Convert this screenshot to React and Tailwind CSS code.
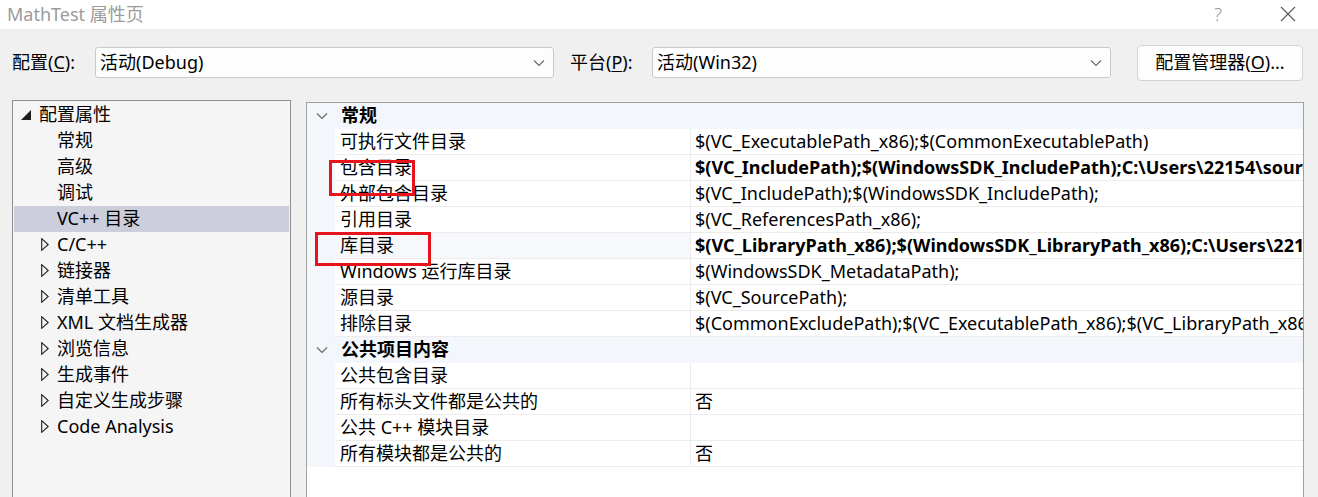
import React from 'react';

const FONT = { fontFamily: '"Noto Sans", "Noto Sans CJK SC", sans-serif' };

const treeItems = [
  { label: '常规', kind: 'leaf' },
  { label: '高级', kind: 'leaf' },
  { label: '调试', kind: 'leaf' },
  { label: 'VC++ 目录', kind: 'leaf', selected: true },
  { label: 'C/C++', kind: 'group' },
  { label: '链接器', kind: 'group' },
  { label: '清单工具', kind: 'group' },
  { label: 'XML 文档生成器', kind: 'group' },
  { label: '浏览信息', kind: 'group' },
  { label: '生成事件', kind: 'group' },
  { label: '自定义生成步骤', kind: 'group' },
  { label: 'Code Analysis', kind: 'group' },
];

const sections = [
  {
    title: '常规',
    rows: [
      ['可执行文件目录', '$(VC_ExecutablePath_x86);$(CommonExecutablePath)'],
      ['包含目录', '$(VC_IncludePath);$(WindowsSDK_IncludePath);C:\\Users\\22154\\source\\repos\\MathLibrary', true],
      ['外部包含目录', '$(VC_IncludePath);$(WindowsSDK_IncludePath);'],
      ['引用目录', '$(VC_ReferencesPath_x86);'],
      ['库目录', '$(VC_LibraryPath_x86);$(WindowsSDK_LibraryPath_x86);C:\\Users\\22154\\source\\repos', true, true],
      ['Windows 运行库目录', '$(WindowsSDK_MetadataPath);'],
      ['源目录', '$(VC_SourcePath);'],
      ['排除目录', '$(CommonExcludePath);$(VC_ExecutablePath_x86);$(VC_LibraryPath_x86)'],
    ],
  },
  {
    title: '公共项目内容',
    rows: [
      ['公共包含目录', ''],
      ['所有标头文件都是公共的', '否'],
      ['公共 C++ 模块目录', ''],
      ['所有模块都是公共的', '否'],
    ],
  },
];

const Chevron = () => (
  <svg width="12" height="8" viewBox="0 0 12 8" className="shrink-0">
    <path d="M1 1.5 L6 6.5 L11 1.5" fill="none" stroke="#6b6b6b" strokeWidth="1.2" />
  </svg>
);

const Dropdown = ({ value }) => (
  <div className="flex h-[31px] w-[459px] items-center justify-between rounded-[3px] border border-[#c9c9c9] bg-[#fdfdfd] pl-[4px] pr-[8px] text-[18px] text-black">
    <span>{value}</span>
    <Chevron />
  </div>
);

const App = () => {
  return (
    <div className="relative flex h-[497px] w-[1318px] flex-col overflow-hidden bg-[#f0f0f0]" style={FONT}>
      {/* title bar */}
      <div className="flex h-[33px] items-center justify-between bg-white pl-[7px] pr-[22px]">
        <span className="text-[18px] text-[#9b9b9b]">MathTest 属性页</span>
        <div className="flex items-center gap-[58px]">
          <span className="text-[19px] font-light text-[#9b9b9b]">?</span>
          <svg width="16" height="16" viewBox="0 0 16 16">
            <path d="M1 1 L15 15 M15 1 L1 15" stroke="#5a5a5a" strokeWidth="1.1" />
          </svg>
        </div>
      </div>

      {/* config row */}
      <div className="flex items-center pl-[12px] pt-[16px] text-[18px] text-black">
        <span className="w-[83px]">
          配置(<span className="underline underline-offset-2">C</span>):
        </span>
        <Dropdown value="活动(Debug)" />
        <span className="ml-[16px] w-[82px]">
          平台(<span className="underline underline-offset-2">P</span>):
        </span>
        <Dropdown value="活动(Win32)" />
        <button className="ml-[26px] h-[36px] w-[166px] rounded-[4px] border border-[#d3d3d3] bg-[#fdfdfd] text-[18px] text-black">
          配置管理器(<span className="underline underline-offset-2">O</span>)...
        </button>
      </div>

      {/* panels */}
      <div className="mt-[19px] flex flex-1 items-start pl-[12px] text-[18px] text-black">
        {/* tree */}
        <div className="h-[400px] w-[279px] border border-[#8f8f8f] bg-[#f5f5f5] pt-[1px]">
          <div className="flex h-[26px] items-center pl-[8px]">
            <svg width="10" height="10" viewBox="0 0 10 10" className="mr-[8px]">
              <polygon points="10,0 10,10 0,10" fill="#1e1e1e" />
            </svg>
            <span>配置属性</span>
          </div>
          {treeItems.map((item) => (
            <div
              key={item.label}
              className={`mx-[1px] flex h-[26px] items-center ${item.selected ? 'bg-[#cccedb]' : ''}`}
            >
              <div className="flex w-[43px] justify-end pr-[8px]">
                {item.kind === 'group' && (
                  <svg width="8" height="13" viewBox="0 0 8 13">
                    <polygon points="0.7,0.7 7.2,6.5 0.7,12.3" fill="none" stroke="#1e1e1e" strokeWidth="1.1" />
                  </svg>
                )}
              </div>
              <span className="whitespace-nowrap">{item.label}</span>
            </div>
          ))}
        </div>

        {/* property grid */}
        <div className="ml-[15px] mt-[2px] h-[400px] w-[998px] overflow-hidden border border-[#a0a0a0] bg-white">
          {sections.map((sec) => (
            <div key={sec.title}>
              <div className="flex h-[26px] items-center bg-[#f3f6fb]">
                <div className="flex w-[28px] justify-center pl-[1px]">
                  <Chevron />
                </div>
                <span className="pl-[6px] font-bold">{sec.title}</span>
              </div>
              {sec.rows.map(([name, value, bold, hl]) => (
                <div key={name} className="flex h-[26px]">
                  <div className="w-[28px] shrink-0 bg-[#f3f6fb]" />
                  <div
                    className={`flex w-[356px] shrink-0 items-center border-b border-r border-[#ececec] pl-[5px] whitespace-nowrap ${hl ? 'bg-[#f7f8fb]' : ''}`}
                  >
                    {name}
                  </div>
                  <div
                    className={`flex min-w-0 flex-1 items-center overflow-hidden border-b border-[#ececec] pl-[4px] whitespace-nowrap ${bold ? 'font-bold' : ''}`}
                  >
                    {value}
                  </div>
                </div>
              ))}
            </div>
          ))}
        </div>
      </div>

      {/* annotation boxes */}
      <div className="absolute left-[329px] top-[160px] h-[36px] w-[86px] border-[3px] border-[#e8141c]" />
      <div className="absolute left-[315px] top-[232px] h-[34px] w-[116px] border-[3px] border-[#e8141c]" />
    </div>
  );
};

export default App;
